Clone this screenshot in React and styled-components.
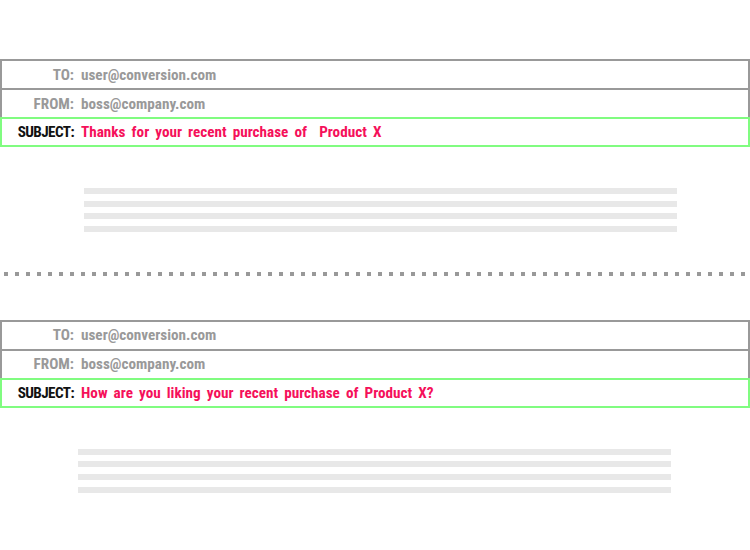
import React from "react";
import styled, { createGlobalStyle } from "styled-components";

const GlobalStyle = createGlobalStyle`
  body {
    margin: 0;
    background: #fff;
    font-family: "Roboto Condensed", "Liberation Sans Narrow", "DejaVu Sans Condensed", sans-serif;
  }
`;

const Page = styled.div`
  width: 750px;
  padding-top: 59px;
`;

const Section = styled.section`
  display: flex;
  flex-direction: column;
`;

const Header = styled.div`
  display: flex;
  flex-direction: column;
`;

const Row = styled.div`
  display: flex;
  align-items: center;
  height: ${(p) => (p.subject ? 26 : 27)}px;
  border: 2px solid ${(p) => (p.subject ? "#80fc80" : "#999")};
  margin-top: ${(p) => (p.first ? 0 : -2)}px;
  font-size: 15.2px;
  font-weight: bold;
  word-spacing: 2.6px;
`;

const Label = styled.span`
  width: 72px;
  text-align: right;
  letter-spacing: ${(p) => (p.subject ? -0.6 : 0)}px;
  color: ${(p) => (p.subject ? "#111" : "#999")};
`;

const Value = styled.span`
  margin-left: 7px;
  color: ${(p) => (p.subject ? "#f5105a" : "#999")};
  white-space: pre;
`;

const Body = styled.div`
  display: flex;
  flex-direction: column;
  gap: 6.6px;
  padding-left: ${(p) => p.indent}px;
  margin-top: 41px;
`;

const Line = styled.div`
  width: 593px;
  height: 6px;
  background: #e8e8e8;
`;

const Divider = styled.div`
  height: 4px;
  margin: 40px 0 44px;
  background: repeating-linear-gradient(
    to right,
    transparent 0 4px,
    #999 4px 8px,
    transparent 8px 11px
  );
`;

const Email = ({ subject, indent }) => (
  <Section>
    <Header>
      <Row first>
        <Label>TO:</Label>
        <Value>user@conversion.com</Value>
      </Row>
      <Row>
        <Label>FROM:</Label>
        <Value>boss@company.com</Value>
      </Row>
      <Row subject>
        <Label subject>SUBJECT:</Label>
        <Value subject>{subject}</Value>
      </Row>
    </Header>
    <Body indent={indent}>
      <Line />
      <Line />
      <Line />
      <Line />
    </Body>
  </Section>
);

export default function App() {
  return (
    <Page>
      <GlobalStyle />
      <Email subject="Thanks for your recent purchase of  Product X" indent={84} />
      <Divider />
      <Email subject="How are you liking your recent purchase of Product X?" indent={78} />
    </Page>
  );
}
